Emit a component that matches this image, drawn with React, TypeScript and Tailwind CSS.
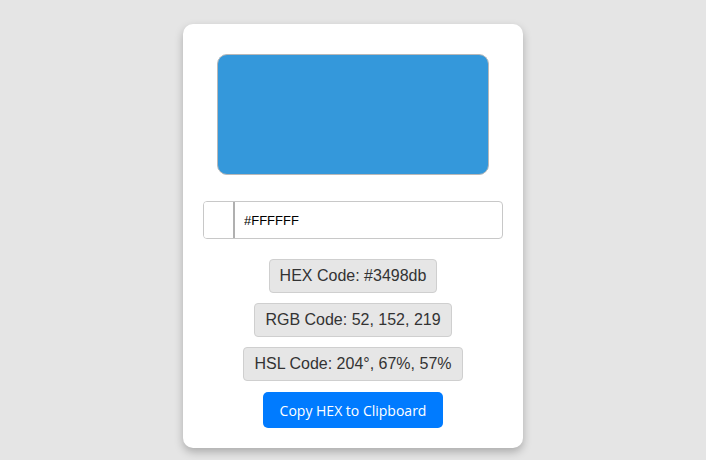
import { useState } from "react"

const App = () => {
  const [hex] = useState('#3498db')
  const [input, setInput] = useState('#FFFFFF')

  return (
    <div className="min-h-[460px] w-full bg-[#e5e5e5] flex justify-center pt-[24px] font-['Liberation_Sans',Arial,sans-serif]">
      <div className="w-[340px] h-[424px] bg-white rounded-[10px] shadow-[0_4px_8px_rgba(0,0,0,0.25)] p-[20px] flex flex-col items-center">
        <div className="w-[272px] h-[122px] mt-[10px] rounded-[10px] border border-[#b8b8b8] bg-[#3498db]" />
        <div className="mt-[26px] w-[300px] h-[38px] flex rounded-[4px] border border-[#c8c8c8] overflow-hidden">
          <div className="w-[31px] border-r-2 border-[#b0b0b0] bg-white" />
          <input
            value={input}
            onChange={e => setInput(e.target.value)}
            className="flex-1 pl-[9px] text-[13px] text-black outline-none font-['Liberation_Sans',Arial,sans-serif]"
          />
        </div>
        <div className="mt-[20px] flex flex-col items-center gap-[10px] text-[16px] text-[#333]">
          <div className="h-[34px] px-[10px] flex items-center bg-[#e6e6e6] border border-[#cfcfcf] rounded-[4px]">HEX Code: {hex}</div>
          <div className="h-[34px] px-[10px] flex items-center bg-[#e6e6e6] border border-[#cfcfcf] rounded-[4px]">RGB Code: 52, 152, 219</div>
          <div className="h-[34px] px-[10px] flex items-center bg-[#e6e6e6] border border-[#cfcfcf] rounded-[4px]">HSL Code: 204°, 67%, 57%</div>
        </div>
        <button className="mt-[11px] w-[180px] h-[36px] bg-[#007bff] text-white rounded-[5px] text-[14px] font-['Open_Sans',sans-serif]">
          Copy HEX to Clipboard
        </button>
      </div>
    </div>
  )
}

export default App
